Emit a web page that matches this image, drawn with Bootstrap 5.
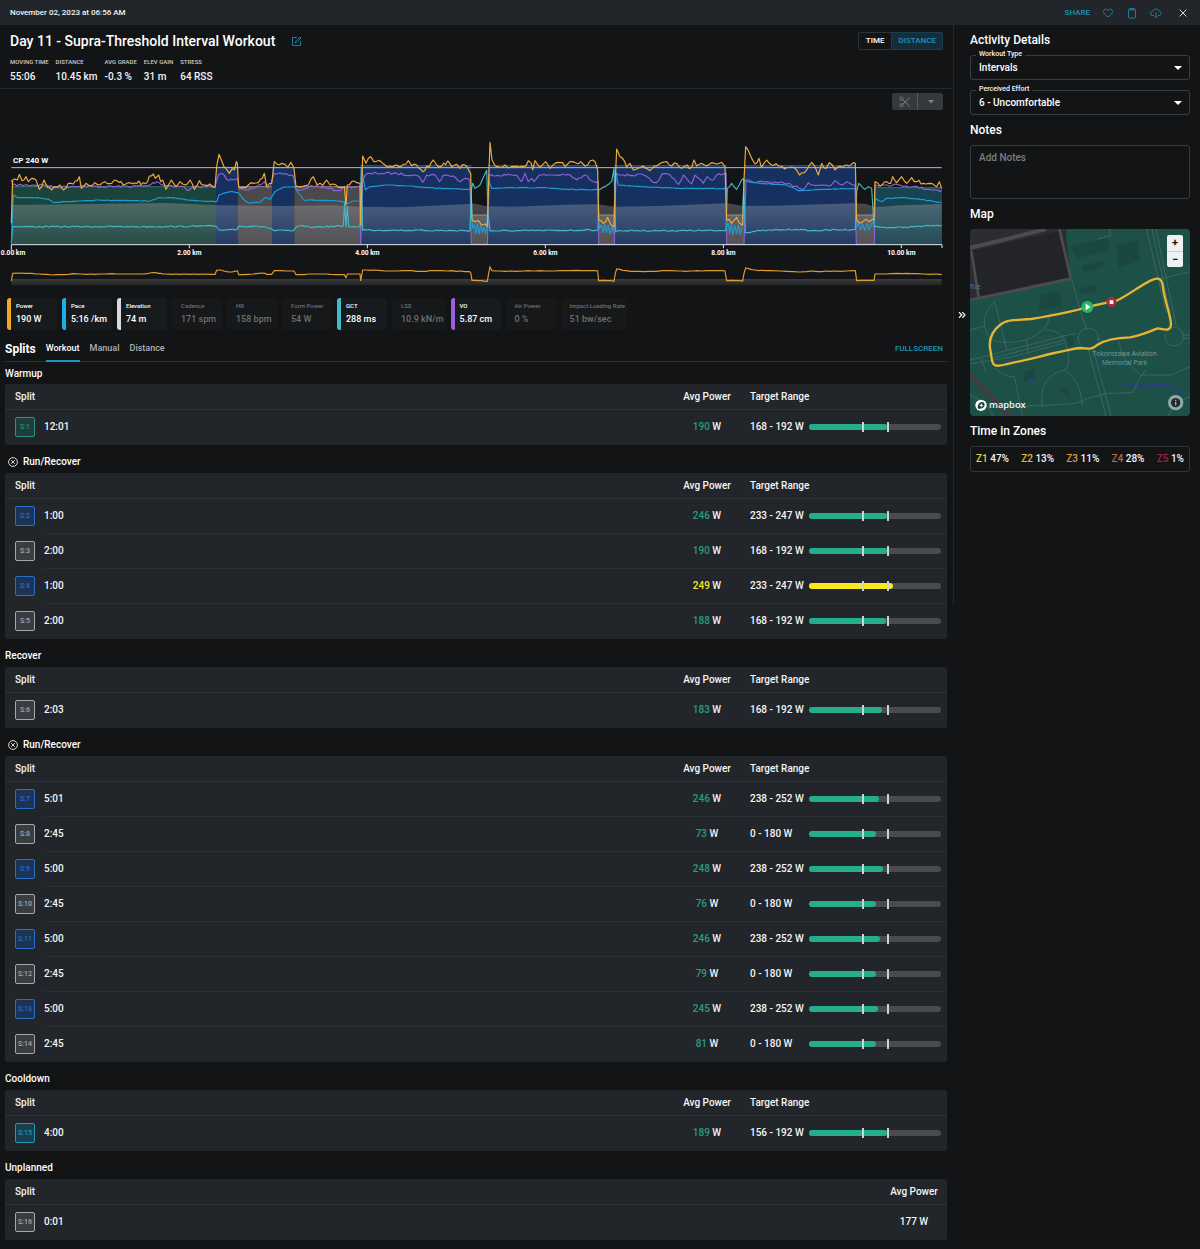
<!DOCTYPE html>
<html lang="en" data-bs-theme="dark">
<head>
<meta charset="utf-8">
<meta name="viewport" content="width=device-width, initial-scale=1">
<title>Day 11 - Supra-Threshold Interval Workout</title>
<link href="https://cdn.jsdelivr.net/npm/bootstrap@5.3.0/dist/css/bootstrap.min.css" rel="stylesheet">
<style>
:root{--page:#131416;--panel:#22262a;--line:#2f3337;--accent:#2492b8;--good:#24ae8b}
body{background:var(--page);color:#f4f5f6;font:500 10px/12px Roboto,sans-serif}
h1,h2,h3{margin:0;font-weight:500}
h1{font-size:14px;line-height:18px}
h2{font-size:12px;line-height:16px}
h3{font-size:10px;line-height:14px}
button{font-weight:500}
a{color:var(--accent);text-decoration:none}
.topbar{background:#22262b;height:25px;padding:0 12px 0 10px;font-size:8px}
.topbar .tools{gap:12px}
.plain-btn{background:none;border:0;padding:0;line-height:0;color:var(--accent)}
.topbar .plain-btn,.head-area .plain-btn{color:#217a9b}
.main-col{min-width:0}
.head-area{height:64px;padding:7px 10px 0;border-bottom:1px solid #25282b}
.facts{gap:7px;margin:8px 0 0}
.facts dt{font-size:6px;line-height:8px;font-weight:500;color:#c9cccf}
.facts dd{margin:5px 0 0;line-height:12px}
.mode-btn{font-size:8px;line-height:16px;padding:0 7px;border:1px solid #2b3236;border-radius:2px;background:var(--page);color:#fff}
.mode-btn.active{background:#132e3a;color:var(--accent);border-color:#1c3d4b;padding:0 6px}
.tool-btn{background:#36393c;border:0;height:17px;width:25px;padding:0;line-height:0;color:#7c7f82;border-radius:2px}
.tool-btn+.tool-btn{border-left:1px solid #56595c;width:26px}
.chart-tools{padding:4px 10px 0 0}
.chart text{font-family:Roboto,sans-serif;font-weight:700;fill:#fff}
.metrics{gap:5px;padding:8px 7px 0}
.metric{min-width:50px;height:32px;padding:4px 2px 0 9px;background:#16181a;border-radius:3px;color:#6d7073}
.metric small{display:block;font-size:6px;line-height:7px}
.metric b{display:block;font-weight:500;font-size:9px;line-height:11px;margin-top:5px;white-space:nowrap}
.metric.on{background:#181b1d;color:#fff;border-left:4px solid var(--tone);padding-left:5px}
.split-head{margin:7px 6px 0 5px;height:25px;border-bottom:1px solid #2c2f32;gap:10px}
.split-head h2{font-weight:700}
.split-head a{font-size:8px}
.tab-btn{font-size:9px;line-height:12px;height:25px;border:0;border-bottom:2px solid transparent;background:none;color:#aeb1b4;padding:0}
.tab-btn.active{color:#fff;border-color:var(--accent)}
.group-title{height:28px;padding:10px 5px 4px;gap:5px}
.group-title svg{margin-left:3px}
.first-title{height:22px;padding-top:5px}
.split-card{margin:0 6px 0 5px;background:var(--panel);border-radius:3px}
.split-card table{width:100%;table-layout:fixed;border-collapse:separate;border-spacing:0}
.split-card th{height:26px;font-weight:500;border-bottom:1px solid var(--line);padding:0}
.split-card td{height:35px;padding:0;border-bottom:1px solid #2b2f33}
.split-card td:first-child,.split-card tr:last-child td{border-bottom-color:transparent}
.split-card th:first-child,.split-card td:first-child{padding-left:10px}
.c-tag{width:39px}.c-pow{width:66px}.c-range{width:207px}
.split-card .range-cell{padding:0 6px 0 10px}
.tag{display:block;width:20px;height:20px;line-height:18px;text-align:center;font-size:7px;font-weight:500;border:1px solid;border-radius:2px}
.t-warm{color:#2a9480;background:#1d3c3b}
.t-run{color:#2870c8;background:#1c3354}
.t-rest{color:#a5a8ab;background:#393d40}
.t-cool{color:#2597b8;background:#183f4d}
.ok{color:#2a9c80}.over{color:#f7e92b}
.target-text{width:59px;white-space:nowrap;flex:none}
.meter-bar{position:relative;height:6px;border-radius:3px;background:#4a4b4c}
.meter-bar span{display:block;height:6px;border-radius:3px;background:var(--good)}
.meter-bar .hot{background:#fbe71e}
.meter-bar::before,.meter-bar::after{content:"";position:absolute;top:-2px;width:2px;height:10px;background:#c9d3d0}
.meter-bar::before{left:40%}.meter-bar::after{left:59%}
.side{width:247px;min-height:579px;border-left:1px solid #25282b}
.side-body{padding:7px 10px 0 0}
.side-body h2{margin:7px 0}
.side-body h2:first-child{margin-top:0}
.fold{width:16px;height:579px;border:0;background:none;color:#fff;padding:0;line-height:0}
.field-box{position:relative}
.field-box+.field-box{margin-top:10px}
.field-box label{position:absolute;left:6px;top:-5px;font-size:7px;line-height:9px;padding:0 3px;background:var(--page)}
.field-box select{display:block;appearance:none;width:100%;height:25px;padding:0 8px;border:1px solid #3a3d40;border-radius:3px;background:transparent;color:#fff;font-weight:500}
.field-box::after{content:"";position:absolute;right:8px;top:11px;border:4px solid transparent;border-top-color:#fff;border-bottom:0;pointer-events:none}
.note-box{display:block;width:100%;height:54px;padding:6px 8px;border:1px solid #3a3d40;border-radius:3px;background:transparent;color:#fff;font-weight:500;resize:none}
.note-box::placeholder{color:#7b7e81}
.map-box{position:relative;border-radius:4px;overflow:hidden}
.map-box svg{display:block;width:100%}
.zoomer{position:absolute;right:7px;top:6px;width:16px;background:#eef1f4;border-radius:2px}
.zoomer button{display:block;width:16px;height:16px;border:0;background:none;color:#111;padding:0;font:700 11px/16px Roboto,sans-serif}
.zoomer button+button{border-top:1px solid #cdd1d4}
.zone-list{height:26px;border:1px solid #303336;border-radius:3px;padding:0 5px}
</style>
</head>
<body>
<header class="topbar d-flex align-items-center justify-content-between">
  <span>November 02, 2023 at 06:56 AM</span>
  <div class="tools d-flex align-items-center">
    <a href="#">SHARE</a>
    <button class="plain-btn" aria-label="Like"><svg width="12" height="12" viewBox="0 0 12 12" fill="none" stroke="currentColor"><path d="M6 10C3 7.700 1.500 6.300 1.500 4.500a2.300 2.300 0 0 1 4.500-.8 2.300 2.300 0 0 1 4.500.8C10.500 6.300 9 7.700 6 10Z"/></svg></button>
    <button class="plain-btn" aria-label="Copy"><svg width="12" height="12" viewBox="0 0 12 12" fill="none" stroke="currentColor"><rect x="2.500" y="2" width="7" height="9" rx="1"/><path d="M4 1.500h4v1.500H4z"/></svg></button>
    <button class="plain-btn" aria-label="Download"><svg width="12" height="12" viewBox="0 0 12 12" fill="none" stroke="currentColor"><path d="M4 8.500H2.500a2 2 0 0 1 0-4 3.300 3.300 0 0 1 6.300-.5 2.300 2.300 0 0 1 .7 4.500H8M6 5v5.500M4.500 9.200 6 10.700l1.500-1.500"/></svg></button>
    <button class="plain-btn ms-1" aria-label="Close"><svg width="10" height="10" viewBox="0 0 10 10" stroke="#d5d7d9"><path d="m1.500 1.500 7 7m0-7-7 7"/></svg></button>
  </div>
</header>
<div class="d-flex">
<main class="main-col flex-grow-1">
  <div class="head-area d-flex justify-content-between">
    <div>
      <div class="d-flex align-items-center">
        <h1>Day 11 - Supra-Threshold Interval Workout</h1>
        <button class="plain-btn ms-3" aria-label="Edit title"><svg width="11" height="11" viewBox="0 0 11 11" fill="none" stroke="currentColor"><path d="M6 1.500H1.500v8h8V5M4 7l.4-1.500L9 1l1 1-4.600 4.600Z"/></svg></button>
      </div>
      <dl class="facts d-flex">
        <div><dt>MOVING TIME</dt><dd>55:06</dd></div>
        <div><dt>DISTANCE</dt><dd>10.45 km</dd></div>
        <div><dt>AVG GRADE</dt><dd>-0.3 %</dd></div>
        <div><dt>ELEV GAIN</dt><dd>31 m</dd></div>
        <div><dt>STRESS</dt><dd>64 RSS</dd></div>
      </dl>
    </div>
    <div class="btn-group align-self-start" role="group" aria-label="Axis">
      <button class="mode-btn rounded-end-0 border-end-0">TIME</button><button class="mode-btn active rounded-start-0">DISTANCE</button>
    </div>
  </div>
  <div class="chart-tools d-flex justify-content-end">
    <button class="tool-btn rounded-end-0" aria-label="Cut"><svg width="12" height="12" viewBox="0 0 12 12" fill="none" stroke="currentColor"><circle cx="2.500" cy="2.700" r="1.600"/><circle cx="2.500" cy="9.300" r="1.600"/><path d="m3.800 3.800 7 6.700m-7-2.300 7-6.700"/></svg></button>
    <button class="tool-btn rounded-start-0" aria-label="Cut options"><svg width="6" height="4" viewBox="0 0 6 4" fill="currentColor"><path d="M0 0h6L3 3.500Z"/></svg></button>
  </div>
  <svg class="chart d-block w-100" viewBox="0 -60 2859 540" role="img" aria-label="Power, pace and ground contact over distance">
    <defs>
      <linearGradient id="elev" x1="0" y1="0" x2="0" y2="1"><stop offset="0" stop-color="#a9aab0" stop-opacity=".36"/><stop offset="1" stop-color="#a9aab0" stop-opacity=".08"/></linearGradient>
      <linearGradient id="strip" x1="0" y1="0" x2="0" y2="1"><stop offset="0" stop-color="#3a3b3d"/><stop offset="1" stop-color="#222325"/></linearGradient>
    </defs>
    <g id="blocks"></g>
    <path fill="url(#elev)" d="M34 225 350 221 500 219 650 226 850 228 1000 226 1080 230 1200 232 1330 226 1425 221 1460 229 1540 230 1700 224 1795 223 1843 230 1980 228 2180 220 2230 228 2330 227 2560 220 2600 222 2625 232 2700 226 2825 222V343H34Z"/>
    <path d="M34 113H2825" stroke="#b9bdc2" stroke-width="3"/>
    <g id="curves" fill="none" stroke-width="3.500" stroke-linejoin="round"></g>
    <path d="M34 360V344H2826V354M568 344v11M1102 344v11M1636 344v11M2170 344v11M2704 344v11" fill="none" stroke="#e6e8ea" stroke-width="3"/>
    <path d="M34 447H2825V466H34Z" fill="url(#strip)"/>
    <g id="overview" fill="none" stroke="#e09c2e" stroke-width="3.500"></g>
    <text x="39" y="100" font-size="24">CP 240 W</text>
    <g font-size="20" text-anchor="middle"><text x="39" y="374">0.00 km</text><text x="568" y="374">2.00 km</text><text x="1102" y="374">4.00 km</text><text x="1636" y="374">6.00 km</text><text x="2170" y="374">8.00 km</text><text x="2704" y="374">10.00 km</text></g>
  </svg>
  <div class="metrics d-flex">
    <div class="metric on" style="--tone:#f5a81f"><small>Power</small><b>190 W</b></div>
    <div class="metric on" style="--tone:#1eaee3"><small>Pace</small><b>5:16 /km</b></div>
    <div class="metric on" style="--tone:#d8d9dc"><small>Elevation</small><b>74 m</b></div>
    <div class="metric"><small>Cadence</small><b>171 spm</b></div>
    <div class="metric"><small>HR</small><b>158 bpm</b></div>
    <div class="metric"><small>Form Power</small><b>54 W</b></div>
    <div class="metric on" style="--tone:#41bdca"><small>GCT</small><b>288 ms</b></div>
    <div class="metric"><small>LSS</small><b>10.9 kN/m</b></div>
    <div class="metric on" style="--tone:#9c5fe0"><small>VO</small><b>5.87 cm</b></div>
    <div class="metric"><small>Air Power</small><b>0 %</b></div>
    <div class="metric"><small>Impact Loading Rate</small><b>51 bw/sec</b></div>
  </div>
  <div class="split-head d-flex align-items-center">
    <h2>Splits</h2>
    <button class="tab-btn active">Workout</button><button class="tab-btn">Manual</button><button class="tab-btn">Distance</button>
    <a href="#" class="ms-auto pe-1">FULLSCREEN</a>
  </div>

  <div class="group-title first-title d-flex align-items-center"><h3>Warmup</h3></div>
  <div class="split-card"><table>
    <colgroup><col class="c-tag"><col><col class="c-pow"><col class="c-range"></colgroup>
    <thead><tr><th colspan="2">Split</th><th class="text-center">Avg Power</th><th class="range-cell">Target Range</th></tr></thead>
    <tbody>
    <tr><td><span class="tag t-warm">S:1</span></td><td>12:01</td><td class="text-center"><span class="ok">190</span> W</td><td class="range-cell"><div class="d-flex align-items-center"><span class="target-text">168 - 192 W</span><div class="meter-bar flex-grow-1"><span style="width:59%"></span></div></div></td></tr>
    </tbody></table></div>

  <div class="group-title d-flex align-items-center"><svg width="10" height="10" viewBox="0 0 10 10" fill="none" stroke="#d5d7d9"><circle cx="5" cy="5" r="4.400"/><path d="m3.200 3.200 3.600 3.600m0-3.600L3.200 6.800"/></svg><h3>Run/Recover</h3></div>
  <div class="split-card"><table>
    <colgroup><col class="c-tag"><col><col class="c-pow"><col class="c-range"></colgroup>
    <thead><tr><th colspan="2">Split</th><th class="text-center">Avg Power</th><th class="range-cell">Target Range</th></tr></thead>
    <tbody>
    <tr><td><span class="tag t-run">S:2</span></td><td>1:00</td><td class="text-center"><span class="ok">246</span> W</td><td class="range-cell"><div class="d-flex align-items-center"><span class="target-text">233 - 247 W</span><div class="meter-bar flex-grow-1"><span style="width:59%"></span></div></div></td></tr>
    <tr><td><span class="tag t-rest">S:3</span></td><td>2:00</td><td class="text-center"><span class="ok">190</span> W</td><td class="range-cell"><div class="d-flex align-items-center"><span class="target-text">168 - 192 W</span><div class="meter-bar flex-grow-1"><span style="width:59%"></span></div></div></td></tr>
    <tr><td><span class="tag t-run">S:4</span></td><td>1:00</td><td class="text-center"><span class="over">249</span> W</td><td class="range-cell"><div class="d-flex align-items-center"><span class="target-text">233 - 247 W</span><div class="meter-bar flex-grow-1"><span class="hot" style="width:64%"></span></div></div></td></tr>
    <tr><td><span class="tag t-rest">S:5</span></td><td>2:00</td><td class="text-center"><span class="ok">188</span> W</td><td class="range-cell"><div class="d-flex align-items-center"><span class="target-text">168 - 192 W</span><div class="meter-bar flex-grow-1"><span style="width:58%"></span></div></div></td></tr>
    </tbody></table></div>

  <div class="group-title d-flex align-items-center"><h3>Recover</h3></div>
  <div class="split-card"><table>
    <colgroup><col class="c-tag"><col><col class="c-pow"><col class="c-range"></colgroup>
    <thead><tr><th colspan="2">Split</th><th class="text-center">Avg Power</th><th class="range-cell">Target Range</th></tr></thead>
    <tbody>
    <tr><td><span class="tag t-rest">S:6</span></td><td>2:03</td><td class="text-center"><span class="ok">183</span> W</td><td class="range-cell"><div class="d-flex align-items-center"><span class="target-text">168 - 192 W</span><div class="meter-bar flex-grow-1"><span style="width:55%"></span></div></div></td></tr>
    </tbody></table></div>

  <div class="group-title d-flex align-items-center"><svg width="10" height="10" viewBox="0 0 10 10" fill="none" stroke="#d5d7d9"><circle cx="5" cy="5" r="4.400"/><path d="m3.200 3.200 3.600 3.600m0-3.600L3.200 6.800"/></svg><h3>Run/Recover</h3></div>
  <div class="split-card"><table>
    <colgroup><col class="c-tag"><col><col class="c-pow"><col class="c-range"></colgroup>
    <thead><tr><th colspan="2">Split</th><th class="text-center">Avg Power</th><th class="range-cell">Target Range</th></tr></thead>
    <tbody>
    <tr><td><span class="tag t-run">S:7</span></td><td>5:01</td><td class="text-center"><span class="ok">246</span> W</td><td class="range-cell"><div class="d-flex align-items-center"><span class="target-text">238 - 252 W</span><div class="meter-bar flex-grow-1"><span style="width:53%"></span></div></div></td></tr>
    <tr><td><span class="tag t-rest">S:8</span></td><td>2:45</td><td class="text-center"><span class="ok">73</span> W</td><td class="range-cell"><div class="d-flex align-items-center"><span class="target-text">0 - 180 W</span><div class="meter-bar flex-grow-1"><span style="width:51%"></span></div></div></td></tr>
    <tr><td><span class="tag t-run">S:9</span></td><td>5:00</td><td class="text-center"><span class="ok">248</span> W</td><td class="range-cell"><div class="d-flex align-items-center"><span class="target-text">238 - 252 W</span><div class="meter-bar flex-grow-1"><span style="width:56%"></span></div></div></td></tr>
    <tr><td><span class="tag t-rest">S:10</span></td><td>2:45</td><td class="text-center"><span class="ok">76</span> W</td><td class="range-cell"><div class="d-flex align-items-center"><span class="target-text">0 - 180 W</span><div class="meter-bar flex-grow-1"><span style="width:51%"></span></div></div></td></tr>
    <tr><td><span class="tag t-run">S:11</span></td><td>5:00</td><td class="text-center"><span class="ok">246</span> W</td><td class="range-cell"><div class="d-flex align-items-center"><span class="target-text">238 - 252 W</span><div class="meter-bar flex-grow-1"><span style="width:54%"></span></div></div></td></tr>
    <tr><td><span class="tag t-rest">S:12</span></td><td>2:45</td><td class="text-center"><span class="ok">79</span> W</td><td class="range-cell"><div class="d-flex align-items-center"><span class="target-text">0 - 180 W</span><div class="meter-bar flex-grow-1"><span style="width:51%"></span></div></div></td></tr>
    <tr><td><span class="tag t-run">S:13</span></td><td>5:00</td><td class="text-center"><span class="ok">245</span> W</td><td class="range-cell"><div class="d-flex align-items-center"><span class="target-text">238 - 252 W</span><div class="meter-bar flex-grow-1"><span style="width:52%"></span></div></div></td></tr>
    <tr><td><span class="tag t-rest">S:14</span></td><td>2:45</td><td class="text-center"><span class="ok">81</span> W</td><td class="range-cell"><div class="d-flex align-items-center"><span class="target-text">0 - 180 W</span><div class="meter-bar flex-grow-1"><span style="width:51%"></span></div></div></td></tr>
    </tbody></table></div>

  <div class="group-title d-flex align-items-center"><h3>Cooldown</h3></div>
  <div class="split-card"><table>
    <colgroup><col class="c-tag"><col><col class="c-pow"><col class="c-range"></colgroup>
    <thead><tr><th colspan="2">Split</th><th class="text-center">Avg Power</th><th class="range-cell">Target Range</th></tr></thead>
    <tbody>
    <tr><td><span class="tag t-cool">S:15</span></td><td>4:00</td><td class="text-center"><span class="ok">189</span> W</td><td class="range-cell"><div class="d-flex align-items-center"><span class="target-text">156 - 192 W</span><div class="meter-bar flex-grow-1"><span style="width:59%"></span></div></div></td></tr>
    </tbody></table></div>

  <div class="group-title d-flex align-items-center"><h3>Unplanned</h3></div>
  <div class="split-card mb-2"><table>
    <colgroup><col class="c-tag"><col><col class="c-pow"></colgroup>
    <thead><tr><th colspan="2">Split</th><th class="text-center">Avg Power</th></tr></thead>
    <tbody>
    <tr><td><span class="tag t-rest">S:16</span></td><td>0:01</td><td class="text-center">177 W</td></tr>
    </tbody></table></div>
</main>

<aside class="side flex-shrink-0 align-self-start d-flex">
  <button class="fold flex-shrink-0" aria-label="Collapse panel"><svg width="8" height="8" viewBox="0 0 8 8" fill="none" stroke="currentColor" stroke-width="1.200"><path d="m1 1.200 2.700 2.800L1 6.800M4.300 1.200 7 4 4.300 6.800"/></svg></button>
  <div class="side-body flex-grow-1">
    <h2>Activity Details</h2>
    <div class="field-box"><label for="wtype">Workout Type</label><select id="wtype"><option>Intervals</option></select></div>
    <div class="field-box"><label for="effort">Perceived Effort</label><select id="effort"><option>6 - Uncomfortable</option></select></div>
    <h2><label class="d-block" for="notes">Notes</label></h2>
    <textarea id="notes" class="note-box" placeholder="Add Notes"></textarea>
    <h2>Map</h2>
    <div class="map-box">
      <svg viewBox="32 27 660 561" role="img" aria-label="Route map">
        <path fill="#1d5148" d="M32 27h660v561H32Z"/>
        <path fill="#2c2d30" d="M32 27H322L320 50 335 175 32 240Z"/>
        <path fill="#232427" d="M38 92 298 34 328 172 60 228Z"/>
        <g fill="none" stroke="#4b4c51"><path stroke-width="12" d="M30 84 150 55 260 27"/><path stroke-width="8" d="M32 240 335 176 300 27M36 92 58 230"/><path stroke="#3d3e42" stroke-width="18" d="M28 460 155 592"/></g>
        <path fill="#1a4742" d="m335 78 110-25 8 38-100 24Zm35 60 60-18 4 18-60 20Zm100-62 65-15 8 60-65 22Zm-225 150 55-14 6 45-68 12Zm115-20 50-14 4 18-50 14ZM190 460l40-20-5 35-30 10ZM320 350l20-6 4 30-18 6ZM300 515l14-18 16 12v18Z"/>
        <path fill="#28417b" d="m478 488 40 2 50 6 35-10 40 16 35 24-20-4-28-20-30-4-36 8-50-10-34-4ZM208 478l16-4 6 12-18 4Z"/>
        <g fill="none" stroke="#4a716d" stroke-width="2">
          <path d="m338 182 42 146m20 52 55 208M350 328m35 52 55 208M562 27l58 250m-42-250 54 250M590 27l60 290M105 240l38 150M692 155 600 178M32 420l110-28 175-45 32-6M32 432l120-20 160-42M95 415l220-55M65 415l15 40M270 288q0 45-70 72-90 20-115-15-30-50 20-100M258 330q50 0 60 35 20 60 0 85-80 15-70 110M318 450q50 40 50 105M32 330l45-12M105 445q40 30 60 25l24 115M165 560q120-5 185-10l35-15 60-15 75-2q30-65 40-68M480 365q0 50 65 100h90l57-25M408 355l20 5M200 358l8 45M32 525q50 20 70 62M625 588q30-50 67-58M450 27l5 20-40 10"/>
          <circle cx="387" cy="355" r="31"/><circle cx="645" cy="350" r="28"/><path d="M672 345h20M672 355h20"/></g>
        <path fill="none" stroke="#eab432" stroke-width="7" stroke-linejoin="round" stroke-linecap="round" d="M456 245 384 261 C340 275 270 288 215 297 C150 302 140 300 122 315 C90 340 88 370 94 395 C98 425 98 440 120 437 C190 424 320 388 362 384 C385 384 395 392 415 374 C440 358 470 353 512 352 C550 345 570 334 595 325 C620 330 635 335 635 310 C632 280 615 240 610 195 C605 170 590 174 575 181 C545 195 500 230 472 242Z"/>
        <circle cx="384" cy="261" r="18" fill="#27b765"/><path fill="#fff" d="m379 251 15 10-15 10Z"/>
        <circle cx="456" cy="246" r="15" fill="#b2253c"/><path fill="#fff" d="M451 241h11v11h-11Z"/>
        <g font-family="Open Sans, sans-serif" font-size="20" fill="#7d9da0"><text x="496" y="408" text-anchor="middle">Tokorozawa Aviation</text><text x="496" y="436" text-anchor="middle">Memorial Park</text><text x="32" y="208" fill="#4a7e99">fice</text></g>
        <circle cx="65" cy="556" r="17" fill="#fff"/><path fill="#1d3a38" d="M56 566q-3-12 5-18 9-5 14 2 3 9-5 14-6 3-14 2Z"/><path fill="#fff" d="m66 549 2 5 5 2-5 2-2 5-2-5-5-2 5-2Z"/>
        <text x="89" y="563" font-family="Open Sans, sans-serif" font-weight="600" font-size="28" fill="#f4f6f6">mapbox</text>
        <circle cx="649" cy="548" r="23" fill="#91aaa7"/><circle cx="649" cy="548" r="14" fill="#222b2d"/><path stroke="#a9bab8" stroke-width="4" d="M649 546v10M649 539v4"/>
      </svg>
      <div class="zoomer"><button aria-label="Zoom in">+</button><button aria-label="Zoom out">−</button></div>
    </div>
    <h2>Time in Zones</h2>
    <div class="zone-list d-flex align-items-center justify-content-between">
      <span><span style="color:#e8d33f">Z1</span> 47%</span><span><span style="color:#e3bb3d">Z2</span> 13%</span><span><span style="color:#dd9a32">Z3</span> 11%</span><span><span style="color:#c26a30">Z4</span> 28%</span><span><span style="color:#a32540">Z5</span> 1%</span>
    </div>
  </div>
</aside>
</div>
<script src="https://cdn.jsdelivr.net/npm/bootstrap@5.3.0/dist/js/bootstrap.bundle.min.js"></script>
<script>
const NS='http://www.w3.org/2000/svg';
const add=(parent,name,attrs)=>{const e=document.createElementNS(NS,name);for(const k in attrs)e.setAttribute(k,attrs[k]);document.getElementById(parent).append(e)};
let seed=7;const rnd=()=>(seed=(seed*16807)%2147483647)/2147483647-.5;
const G='#1b453c',B='#16315f',R='#4a4a4c',T='#184350';
[[34,648,170,G],[648,714,112,B],[714,816,170,R],[816,883,112,B],[883,1081,170,R],[1081,1414,107,B],[1414,1464,255,R],[1464,1795,107,B],[1795,1843,255,R],[1843,2180,107,B],[2180,2233,255,R],[2233,2568,107,B],[2568,2625,255,R],[2625,2826,173,T]]
 .forEach(([a,b,y,c])=>{add('blocks','rect',{x:a,y,width:b-a,height:343-y,fill:c});add('blocks','path',{d:`M${a} ${y}H${b}`,stroke:c===R?'#8a8889':c===B?'#245a9c':'#2f7768','stroke-width':3})});
// Each series: parts of [x offset, "x,y x,y ..."]
const join=parts=>parts.flatMap(([o,s])=>s.trim().split(/\s+/).map(p=>{const[x,y]=p.split(',').map(Number);return[x+o,y]}));
const power=join([[0,'34,280 38,150 52,150 58,133 66,152 78,140 85,155 95,145 108,150 118,178 132,150 142,172 155,180 170,172 180,165 190,180 205,160 220,162 238,140 244,175 258,160 275,168 285,158 300,165 315,155 335,160 350,152 370,165 390,158 410,160 430,158 443,155 448,138 460,132 466,145 476,135 482,155 488,150 498,178 514,150 528,170 540,155 556,165 570,150 583,178 598,152 612,165 630,162 645,172 650,110 657,73 662,85 672,110 680,118 688,130 697,115 703,120 709,95 712,100 716,170 730,172 745,165 760,160 775,158 793,130 800,170 815,160 823,95 832,103 845,100 855,103 863,112 873,97 882,115 888,170 900,172 912,168 925,165'],
[930,'10,140 22,165 38,166 50,150 60,165 85,172 103,170 108,225 112,165 125,155 140,158 150,160 152,285 158,78 168,100 182,80 192,95 215,97 225,105 240,108 260,105 280,103 295,92 305,107 320,105 338,125 350,108 358,110 370,90 380,105 395,108 413,93 425,110 440,103 450,115 465,105 478,125 482,130 486,270 495,275 505,272 515,285 525,282 532,290 536,150 540,37 546,90 556,108 570,112 585,105 600,112 620,108 640,110 655,92 664,100 668,120 675,92 690,112 707,95 720,115 735,100 750,98 765,110 780,95 800,100 812,95 825,108 840,93 855,95 863,120 866,270 880,280 893,262 903,285 912,290 916,150 920,57'],
[1860,'0,80 8,85 20,110 30,100 40,120 55,115 70,108 90,122 110,108 125,98 140,95 155,108 170,100 185,115 195,108 215,112 222,90 230,108 245,100 260,108 275,98 290,102 305,97 315,110 320,270 335,280 350,262 358,280 368,285 372,150 377,50 385,62 395,85 405,102 417,85 424,112 440,90 455,105 480,108 500,113 520,112 538,135 560,120 575,97 585,110 595,135 605,100 618,115 628,98 645,120 660,108 680,105 700,98 706,100 710,270 725,278 738,268 748,275 758,268 762,270 765,155 780,168 800,155 812,160 818,140 830,158 845,140 860,160 875,143 890,155 910,160 930,160 950,170 958,155 965,175']]);
const vo=join([[0,'34,150 38,165 140,165 160,172 240,168 320,170 440,168 470,155 490,165 550,170 565,182 580,170 645,170 655,135 665,130 680,148 700,150 712,145 718,178 745,180 775,165 793,155 803,175 812,165 822,130 880,138 888,178 905,180 925,172'],
[930,'0,168 30,170 50,175 85,182 105,172 150,170 152,343 158,150 168,133 200,130 250,130 310,135 325,138 338,157 350,135 375,135 388,155 400,135 430,138 450,155 465,145 480,152 484,343 532,343 538,135 620,135 635,155 645,130 655,155 665,145 672,155 690,135 720,135 780,135 800,150 825,135 845,152 865,155 866,343 913,343 918,130'],
[1860,'10,135 70,135 100,157 110,158 125,133 150,135 175,163 190,135 215,162 225,135 250,160 262,140 280,150 290,135 318,130 320,343 372,343 378,150 400,158 440,155 500,162 530,168 548,180 565,158 580,165 600,165 630,168 645,152 665,165 680,155 705,165 709,343 763,343 765,165 800,165 840,165 880,170 930,178 965,182']]);
const pace=join([[0,'34,340 40,195 50,202 100,203 145,208 160,218 200,215 300,210 450,213 475,203 520,203 560,210 600,213 650,215 657,195 690,185 715,188 730,208 745,218 780,217 795,203 810,208 825,185 850,172 885,170 895,190 915,212'],
[930,'0,210 80,213 115,220 130,213 152,212 155,115 166,180 180,170 230,165 300,168 380,175 480,178 484,200 488,295 493,285 497,310 502,280 507,312 512,285 517,308 522,290 527,312 531,290 536,150 545,175 640,173 700,173 770,178 840,180 864,178 868,295 874,285 879,308 884,282 889,308 894,285 900,312 906,290 911,310 916,120 925,165'],
[1860,'60,170 180,175 318,176 320,290 325,280 329,310 334,282 339,315 344,285 350,310 356,285 361,315 366,290 372,150 385,155 420,160 500,165 535,182 600,178 700,176 708,180 710,290 716,280 722,300 728,282 735,302 742,280 748,300 756,278 763,285 766,205 785,215 800,205 850,203 900,208 965,218']]);
const gct=join([[0,'34,340 38,290 100,290 300,290 480,290 648,288 657,300 700,298 710,300 716,288 790,290 810,295 822,302 880,302 890,290 920,288'],
[930,'0,292 100,288 104,215 108,290 112,230 116,290 150,290 154,115 158,300 480,302 484,180 488,160 495,175 510,165 530,120 534,250 540,303 864,300 866,180 885,170 905,155 912,115 917,305'],
[1860,'0,302 318,302 322,175 335,160 350,178 365,150 371,145 376,308 420,302 530,298 570,302 706,298 710,185 716,160 735,178 745,170 755,175 762,290 820,293 965,286']]);
// Fills the gaps between samples with a small ripple.
const ripple=(pts,amp)=>{const out=[];pts.forEach(([x,y],i)=>{out.push([x,y]);const n=pts[i+1];if(!n||y>340||Math.abs(n[1]-y)>30)return;const k=Math.floor((n[0]-x)/6);for(let j=1;j<k;j++)out.push([x+(n[0]-x)*j/k,y+(n[1]-y)*j/k+rnd()*amp])});return out};
const path=pts=>'M'+pts.map(p=>p.map(v=>Math.round(v)).join(' ')).join('L');
add('curves','path',{d:path(ripple(vo,7)),stroke:'#8f5fd8'});
add('curves','path',{d:path(ripple(gct,4)),stroke:'#41b7c6'});
add('curves','path',{d:path(ripple(pace,2)),stroke:'#1d9bd2'});
add('curves','path',{d:path(ripple(power,12)),stroke:'#efab3d'});
// The overview is the power curve, flattened and smoothed over its neighbours.
const calm=power.map(([x,y],i)=>{const near=[power[i-1],power[i+1]].filter(p=>p&&Math.abs(p[1]-y)<40);const avg=(y+near.reduce((s,p)=>s+p[1],0))/(near.length+1);return[x,433+(avg-165)*.17]});
add('overview','path',{d:path(calm)});
</script>
</body>
</html>
